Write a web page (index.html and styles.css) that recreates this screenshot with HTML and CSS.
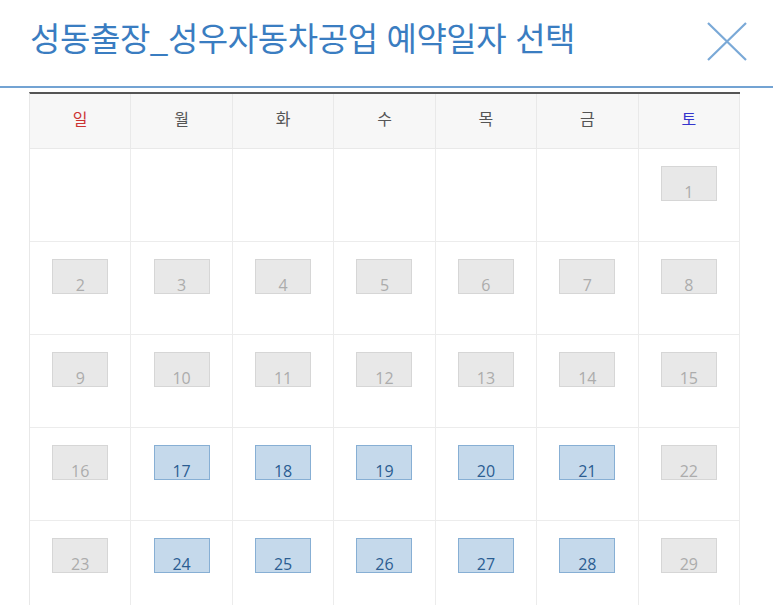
FILE: index.html
```html
<!DOCTYPE html>
<html lang="ko">
<head>
<meta charset="utf-8">
<title>예약일자 선택</title>
<link rel="stylesheet" href="styles.css">
</head>
<body>
<div class="modal">
  <header class="modal-head">
    <h1 class="title">성동출장_성우자동차공업 예약일자 선택</h1>
    <button class="close" type="button" aria-label="닫기">
      <svg width="40" height="40" viewBox="0 0 40 40"><path d="M1 1 L39 38 M39 1 L1 38" stroke="#7aa9d7" stroke-width="2.2" fill="none"/></svg>
    </button>
  </header>
  <div class="calendar">
    <div class="dow sun">일</div>
    <div class="dow">월</div>
    <div class="dow">화</div>
    <div class="dow">수</div>
    <div class="dow">목</div>
    <div class="dow">금</div>
    <div class="dow sat">토</div>

    <div class="cell"></div><div class="cell"></div><div class="cell"></div><div class="cell"></div><div class="cell"></div><div class="cell"></div>
    <div class="cell"><span class="day">1</span></div>

    <div class="cell"><span class="day">2</span></div>
    <div class="cell"><span class="day">3</span></div>
    <div class="cell"><span class="day">4</span></div>
    <div class="cell"><span class="day">5</span></div>
    <div class="cell"><span class="day">6</span></div>
    <div class="cell"><span class="day">7</span></div>
    <div class="cell"><span class="day">8</span></div>

    <div class="cell"><span class="day">9</span></div>
    <div class="cell"><span class="day">10</span></div>
    <div class="cell"><span class="day">11</span></div>
    <div class="cell"><span class="day">12</span></div>
    <div class="cell"><span class="day">13</span></div>
    <div class="cell"><span class="day">14</span></div>
    <div class="cell"><span class="day">15</span></div>

    <div class="cell"><span class="day">16</span></div>
    <div class="cell"><span class="day on">17</span></div>
    <div class="cell"><span class="day on">18</span></div>
    <div class="cell"><span class="day on">19</span></div>
    <div class="cell"><span class="day on">20</span></div>
    <div class="cell"><span class="day on">21</span></div>
    <div class="cell"><span class="day">22</span></div>

    <div class="cell"><span class="day">23</span></div>
    <div class="cell"><span class="day on">24</span></div>
    <div class="cell"><span class="day on">25</span></div>
    <div class="cell"><span class="day on">26</span></div>
    <div class="cell"><span class="day on">27</span></div>
    <div class="cell"><span class="day on">28</span></div>
    <div class="cell"><span class="day">29</span></div>
  </div>
</div>
</body>
</html>
```
FILE: styles.css
```css
html, body {
  margin: 0;
  padding: 0;
  background: #fff;
  overflow: hidden;
}
body {
  font-family: "Open Sans", "Noto Sans CJK KR", sans-serif;
}
.modal {
  width: 773px;
}
.modal-head {
  display: flex;
  align-items: flex-start;
  justify-content: space-between;
  height: 86px;
  border-bottom: 2px solid #73a3d3;
  box-sizing: content-box;
}
.title {
  margin: 21px 0 0 30px;
  font-family: "Noto Sans CJK KR", sans-serif;
  font-weight: 400;
  font-size: 33px;
  line-height: 33px;
  color: #3a7dc1;
  letter-spacing: -0.4px;
  white-space: nowrap;
}
.close {
  margin: 22px 26px 0 0;
  padding: 0;
  border: 0;
  background: none;
  width: 40px;
  height: 40px;
}
.close svg { display: block; }
.calendar {
  margin: 4px 0 0 29px;
  width: 711px;
  display: grid;
  grid-template-columns: repeat(7, 1fr);
  grid-auto-rows: 93px;
  grid-template-rows: 55px;
  border-top: 2px solid #555;
  border-left: 1px solid #e8e8e8;
  box-sizing: border-box;
}
.dow {
  display: flex;
  align-items: center;
  justify-content: center;
  background: #f7f7f7;
  border-right: 1px solid #e9e9e9;
  border-bottom: 1px solid #e9e9e9;
  font-family: "Noto Sans CJK KR", sans-serif;
  font-size: 16px;
  color: #555;
  padding-bottom: 6px;
}
.dow.sun { color: #cc3333; }
.dow.sat { color: #3535cc; }
.cell {
  border-right: 1px solid #ececec;
  border-bottom: 1px solid #ececec;
  display: flex;
  justify-content: center;
  align-items: flex-start;
  padding-top: 17px;
}
.day {
  box-sizing: border-box;
  width: 56px;
  height: 35px;
  background: #e8e8e8;
  border: 1px solid #d6d6d6;
  display: flex;
  align-items: flex-end;
  justify-content: center;
  font-family: "Open Sans", sans-serif;
  font-size: 16px;
  line-height: 16px;
  color: #acacac;
}
.day.on {
  background: #c5d9eb;
  border-color: #87afd4;
  color: #2b5d92;
}
```
